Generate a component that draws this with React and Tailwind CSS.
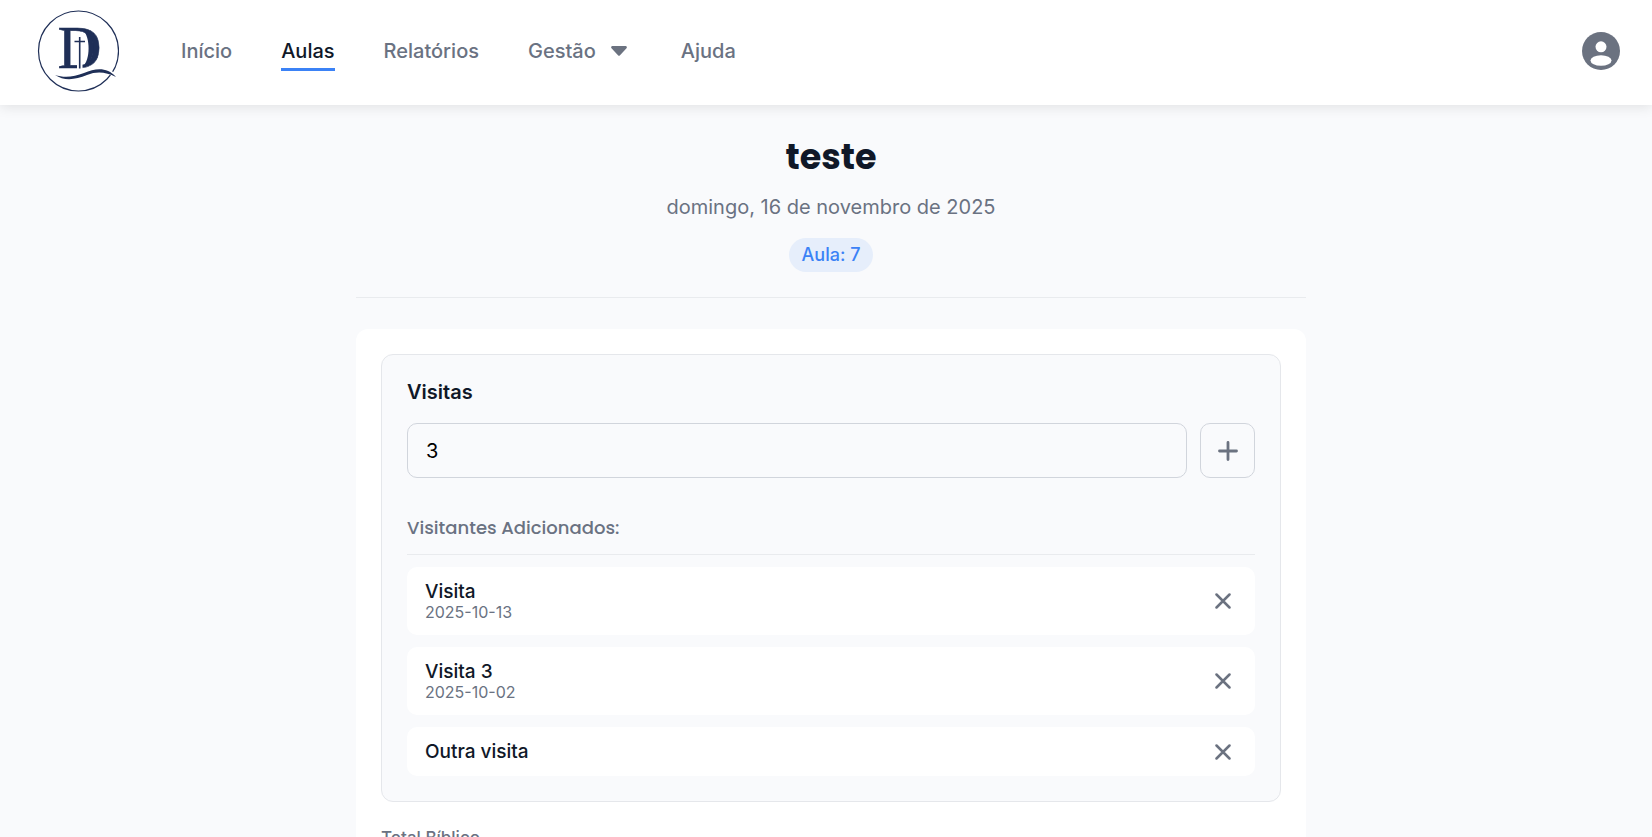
import { useState } from "react";

const links = [
  { label: "Início" },
  { label: "Aulas", active: true },
  { label: "Relatórios" },
  { label: "Gestão", menu: true },
  { label: "Ajuda" },
];

const initialVisitors = [
  { name: "Visita", date: "2025-10-13" },
  { name: "Visita 3", date: "2025-10-02" },
  { name: "Outra visita" },
];

function Logo() {
  return (
    <svg viewBox="0 0 82 82" className="size-[82px]" role="img" aria-label="Logo">
      <circle cx="41.500" cy="41" r="40" fill="none" stroke="#1f2f57" strokeWidth="1.2" />
      <text x="20.500" y="58" fill="#1f2f57" stroke="#1f2f57" strokeWidth="0.500" fontSize="61" className="font-['Liberation_Serif',serif]">D</text>
      <path d="M46 20C60 23 60 53 46 56.500C53.500 50 53.500 27 46 20z" fill="#1f2f57" />
      <path d="M40 50h5.500v10h-5.500z" fill="#fff" />
      <path d="M42.700 27v31.500M37.500 31.500h10.500" stroke="#1f2f57" strokeWidth="1.600" fill="none" />
      <path d="M18 65c11 5 21 3 31-1 10-4 20-5 30 2-10-7-20-7-30-3-11 5-21 7-31 2z" fill="#fff" stroke="#fff" strokeWidth="4" />
      <path d="M18 65c9 3 19 2 29-2 12-5 23-6 32 4-10-5-19-6-29-2-12 5-23 6-32 0z" fill="#1f2f57" />
    </svg>
  );
}

function UserIcon() {
  return (
    <svg viewBox="0 0 38 38" className="size-[38px]" aria-hidden="true">
      <circle cx="19" cy="19" r="19" fill="#6b7280" />
      <circle cx="19" cy="14.800" r="5.500" fill="#fff" />
      <ellipse cx="19" cy="28.500" rx="10.500" ry="5.300" fill="#fff" />
    </svg>
  );
}

function Cross() {
  return (
    <svg viewBox="0 0 16 16" className="size-4" fill="none" stroke="#6b7280" strokeWidth="2.500" strokeLinecap="round" aria-hidden="true">
      <path d="M1.500 1.500l13 13M14.500 1.500l-13 13" />
    </svg>
  );
}

export default function App() {
  const [visitors, setVisitors] = useState(initialVisitors);
  const [count, setCount] = useState("3");

  return (
    <div className="flex h-screen flex-col overflow-hidden bg-[#f9fafc] font-[Inter,sans-serif] text-gray-900">
      <header className="z-10 flex h-[105px] shrink-0 items-center bg-white pr-8 pb-[3px] pl-[37px] shadow-[0_2px_12px_rgba(0,0,0,0.1)]">
        <a href="#inicio" className="mr-[62px]">
          <Logo />
        </a>
        <nav className="flex flex-1 items-center gap-[49px] text-xl font-medium text-gray-500">
          {links.map((l) =>
            l.menu ? (
              <button key={l.label} type="button" className="flex items-center gap-[15px] pr-[5px]">
                {l.label}
                <svg viewBox="0 0 16 10" className="h-[10px] w-4" aria-hidden="true">
                  <path d="M1.500 0h13a1.300 1.300 0 0 1 1 2.200L9 9.300a1.400 1.400 0 0 1-2 0L.500 2.200A1.300 1.300 0 0 1 1.500 0z" fill="#6b7280" />
                </svg>
              </button>
            ) : (
              <a
                key={l.label}
                href="#"
                className={l.active ? "border-y-3 border-t-transparent border-b-[#3b82f6] py-[3px] text-gray-900" : ""}
              >
                {l.label}
              </a>
            )
          )}
        </nav>
        <button type="button" aria-label="Perfil">
          <UserIcon />
        </button>
      </header>

      <main className="flex-1 overflow-y-auto pl-[10px] [scrollbar-width:none]">
        <div className="mx-auto max-w-[950px]">
          <div className="flex flex-col items-center border-b border-[#e9ebee] pt-7 pb-[25px]">
            <h1 className="font-[Poppins,Inter,sans-serif] text-[35px] leading-[48px] font-bold">teste</h1>
            <p className="mt-3 text-xl leading-7 text-gray-500">domingo, 16 de novembro de 2025</p>
            <span className="mt-[17px] rounded-full bg-[#e6eefb] px-[13px] text-lg leading-[34px] font-medium text-[#3b82f6]">
              Aula: 7
            </span>
          </div>

          <div className="mt-[31px] rounded-xl bg-white p-[25px]">
            <section className="rounded-xl border border-gray-200 bg-[#f9fafc] px-[25px] pt-[23px] pb-[25px]">
              <label htmlFor="visitas" className="block text-xl leading-7 font-semibold">
                Visitas
              </label>
              <div className="mt-[17px] flex gap-[13px]">
                <input
                  id="visitas"
                  value={count}
                  onChange={(e) => setCount(e.target.value)}
                  className="h-[55px] min-w-0 flex-1 rounded-[10px] border border-gray-300 px-[18px] text-xl text-black"
                />
                <button
                  type="button"
                  aria-label="Adicionar visitante"
                  className="flex size-[55px] items-center justify-center rounded-[10px] border border-gray-300"
                >
                  <svg viewBox="0 0 20 20" className="size-5" fill="none" stroke="#6b7280" strokeWidth="2.800" strokeLinecap="round" aria-hidden="true">
                    <path d="M10 1.500v17M1.500 10h17" />
                  </svg>
                </button>
              </div>
              <h2 className="mt-9 border-b border-[#e9ebee] pb-[13px] font-[Poppins,Inter,sans-serif] text-lg leading-[27px] font-medium text-gray-500">
                Visitantes Adicionados:
              </h2>
              <ul className="mt-3 flex flex-col gap-3">
                {visitors.map((v) => (
                  <li key={v.name} className="flex items-center justify-between rounded-[10px] bg-white py-[13px] pr-6 pl-[18px]">
                    <div>
                      <p className="text-[19px] leading-[23px] font-medium">{v.name}</p>
                      {v.date && <p className="text-base leading-[19px] text-gray-500">{v.date}</p>}
                    </div>
                    <button
                      type="button"
                      aria-label={"Remover " + v.name}
                      onClick={() => setVisitors(visitors.filter((x) => x !== v))}
                    >
                      <Cross />
                    </button>
                  </li>
                ))}
              </ul>
            </section>
            <p className="mt-6 text-[17px] leading-6 font-medium text-gray-500">Total Bíblico</p>
          </div>
        </div>
      </main>
    </div>
  );
}
